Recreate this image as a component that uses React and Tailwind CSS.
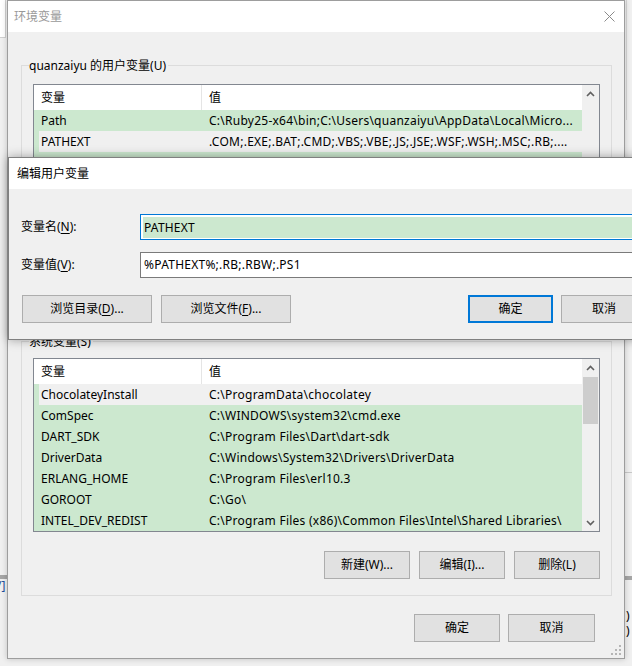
const userRows = [
  ["Path", "C:\\Ruby25-x64\\bin;C:\\Users\\quanzaiyu\\AppData\\Local\\Micro..."],
  ["PATHEXT", ".COM;.EXE;.BAT;.CMD;.VBS;.VBE;.JS;.JSE;.WSF;.WSH;.MSC;.RB;...."],
  ["TEMP", "%USERPROFILE%\\AppData\\Local\\Temp"],
  ["TMP", "%USERPROFILE%\\AppData\\Local\\Temp"],
];

const sysRows = [
  ["ChocolateyInstall", "C:\\ProgramData\\chocolatey"],
  ["ComSpec", "C:\\WINDOWS\\system32\\cmd.exe"],
  ["DART_SDK", "C:\\Program Files\\Dart\\dart-sdk"],
  ["DriverData", "C:\\Windows\\System32\\Drivers\\DriverData"],
  ["ERLANG_HOME", "C:\\Program Files\\erl10.3"],
  ["GOROOT", "C:\\Go\\"],
  ["INTEL_DEV_REDIST", "C:\\Program Files (x86)\\Common Files\\Intel\\Shared Libraries\\"],
];

function Chevron({ down }) {
  return (
    <svg width="9" height="6" viewBox="0 0 9 6" className={down ? "rotate-180" : ""}>
      <path d="M1 5 L4.5 1.5 L8 5" fill="none" stroke="#606060" strokeWidth="1.6" />
    </svg>
  );
}

function ListView({ rows, selected, thumb }) {
  return (
    <div className="flex w-[567px] h-[174px] border border-[#828790] bg-[#cce8cf]">
      <div className="flex flex-col w-[548px] overflow-hidden">
        <div className="flex h-[25px] shrink-0 items-center bg-white">
          <div className="w-[168px] h-full flex items-center pl-[7px] border-r border-[#e5e5e5]">变量</div>
          <div className="flex-1 pl-[7px]">值</div>
        </div>
        {rows.map(([name, value], i) => (
          <div key={name} className="flex h-[21px] shrink-0 pl-[5px]">
            <div className={`flex flex-1 items-center ${i === selected ? "bg-[#f0f0f0]" : ""}`}>
              <div className="w-[163px] pl-[2px] whitespace-nowrap">{name}</div>
              <div className="flex-1 pl-[7px] whitespace-nowrap tracking-[0.25px]">{value}</div>
            </div>
          </div>
        ))}
      </div>
      <div className="flex flex-col w-[17px] bg-[#f0f0f0]">
        <div className="h-[17px] flex items-center justify-center">
          <Chevron />
        </div>
        {thumb && <div className="mt-[1px] mx-[1px] h-[47px] bg-[#cdcdcd]" />}
        <div className="flex-1" />
        <div className="h-[17px] flex items-center justify-center">
          <Chevron down />
        </div>
      </div>
    </div>
  );
}

function Btn({ children, className = "", border = "border border-[#adadad]" }) {
  return (
    <div className={`h-[28px] flex items-center justify-center bg-[#e1e1e1] ${border} ${className}`}>
      {children}
    </div>
  );
}

function GroupBox({ label, className = "", children }) {
  return (
    <div className={`relative w-[591px] border border-[#dcdcdc] ${className}`}>
      <span className="absolute left-[7px] top-[-7px] bg-[#f0f0f0] pr-[2px] leading-[14px]">{label}</span>
      {children}
    </div>
  );
}

export default function App() {
  return (
    <div className="relative w-[632px] h-[666px] overflow-hidden bg-[#f0f0f0] text-[12px] leading-none text-black font-[family-name:'Noto_Sans','Noto_Sans_CJK_SC',sans-serif]">
      {/* window behind, edges peeking out */}
      <div className="absolute left-0 top-0 w-[6px] h-[38px] bg-white border-r border-b border-[#cfcfcf]" />
      <div className="absolute left-0 top-[575px] w-[8px] h-[4px] bg-[#a5a5a5]" />
      <div className="absolute left-[-3px] top-[580px] text-[#1d4f9c]">/]</div>
      <div className="absolute left-[626px] top-0 w-px h-[120px] bg-[#d6d6d6]" />
      <div className="absolute left-[624px] top-[472px] w-[8px] h-px bg-[#c8c8c8]" />
      <div className="absolute left-[624px] top-[576px] w-[8px] h-[4px] bg-[#a5a5a5]" />
      <div className="absolute left-[626px] top-[610px] leading-[12px]">)</div>
      <div className="absolute left-[626px] top-[625px] leading-[12px]">)</div>

      {/* 环境变量 */}
      <div className="absolute left-[7px] top-0 w-[618px] h-[659px] flex flex-col border border-[#9d9d9d] bg-[#f0f0f0] shadow-[0_0_6px_rgba(0,0,0,0.2)]">
        <div className="h-[31px] shrink-0 flex items-center justify-between bg-white pl-[6px] pr-[9px] text-[#999999]">
          <span>环境变量</span>
          <svg width="11" height="11" viewBox="0 0 11 11">
            <path d="M0.5 0.5 L10.5 10.5 M10.5 0.5 L0.5 10.5" stroke="#8a8a8a" strokeWidth="1" fill="none" />
          </svg>
        </div>
        <div className="flex flex-col pl-[13px] pt-[33px]">
          <GroupBox label="quanzaiyu 的用户变量(U)" className="h-[261px] pl-[11px] pt-[18px]">
            <ListView rows={userRows} selected={1} />
          </GroupBox>
          <GroupBox label="系统变量(S)" className="mt-[15px] h-[255px] pl-[11px] pt-[16px]">
            <ListView rows={sysRows} selected={0} thumb />
            <div className="flex justify-end gap-[9px] w-[567px] mt-[19px]">
              <Btn className="w-[86px]">新建(W)...</Btn>
              <Btn className="w-[86px]">编辑(I)...</Btn>
              <Btn className="w-[86px]">删除(L)</Btn>
            </div>
          </GroupBox>
          <div className="flex justify-end gap-[8px] pr-[29px] mt-[18px]">
            <Btn className="w-[86px]">确定</Btn>
            <Btn className="w-[87px]">取消</Btn>
          </div>
        </div>
        <svg className="absolute right-[3px] bottom-[3px]" width="10" height="10" viewBox="0 0 10 10">
          <g fill="#b5b5b5">
            <rect x="8" y="0" width="2" height="2" />
            <rect x="4" y="4" width="2" height="2" />
            <rect x="8" y="4" width="2" height="2" />
            <rect x="0" y="8" width="2" height="2" />
            <rect x="4" y="8" width="2" height="2" />
            <rect x="8" y="8" width="2" height="2" />
          </g>
        </svg>
      </div>

      {/* 编辑用户变量 */}
      <div className="absolute left-[8px] top-[157px] w-[700px] h-[183px] flex flex-col border border-[#808080] bg-[#f0f0f0] shadow-[0_0_10px_rgba(0,0,0,0.35)]">
        <div className="h-[31px] shrink-0 flex items-center bg-white pl-[8px]">编辑用户变量</div>
        <div className="flex flex-col pl-[12px] pt-[25px]">
          <div className="flex items-center h-[26px]">
            <span className="w-[119px]">
              变量名(<span className="underline underline-offset-2">N</span>):
            </span>
            <div className="w-[520px] h-[26px] border border-[#0078d7] bg-white pt-[2px] pb-[1px] px-[2px]">
              <div className="h-full flex items-center bg-[#cce8cf] pl-[1px] tracking-[0.2px]">PATHEXT</div>
            </div>
          </div>
          <div className="flex items-center h-[26px] mt-[12px]">
            <span className="w-[119px]">
              变量值(<span className="underline underline-offset-2">V</span>):
            </span>
            <div className="w-[520px] h-[26px] flex items-center border border-[#7a7a7a] bg-white pl-[3px] tracking-[0.25px]">
              %PATHEXT%;.RB;.RBW;.PS1
            </div>
          </div>
          <div className="flex mt-[17px] ml-[1px]">
            <Btn className="w-[130px]">
              浏览目录(<span className="underline underline-offset-2">D</span>)...
            </Btn>
            <Btn className="w-[130px] ml-[9px]">
              浏览文件(<span className="underline underline-offset-2">F</span>)...
            </Btn>
            <Btn className="w-[85px] ml-[177px]" border="border-2 border-[#0078d7]">确定</Btn>
            <Btn className="w-[86px] ml-[8px]">取消</Btn>
          </div>
        </div>
      </div>
    </div>
  );
}
